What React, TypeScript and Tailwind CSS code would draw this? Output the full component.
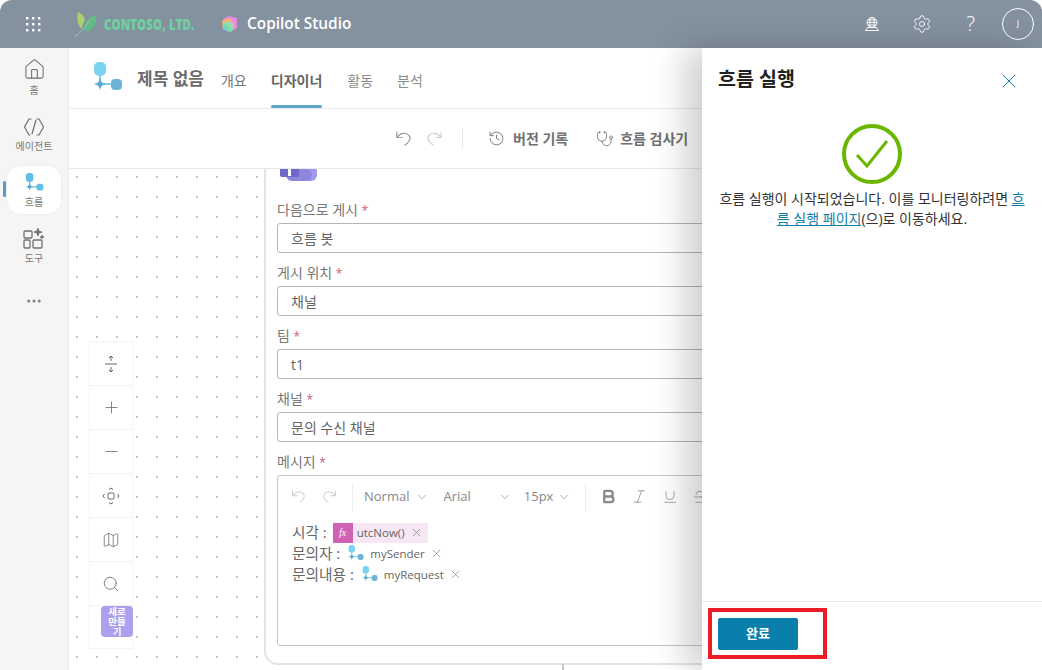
import React from "react";
import { Home, Ellipsis, Plus, Minus, Map, Search, X, ChevronDown, History, Stethoscope, Settings, Bold, Italic, Underline, Strikethrough } from "lucide-react";

const FlowIcon = ({ size = 32, a = "#7bd3ef", b = "#6db3d6" }: { size?: number; a?: string; b?: string }) => (
  <svg width={size} height={size} viewBox="0 0 32 32" fill="none">
    <rect x="3" y="0" width="12" height="14" rx="5" fill={a} />
    <path d="M9 13v8M13 22h8" stroke={a} strokeWidth="2" />
    <path d="M9 16c1 4 2 5 6 6-4 1-5 2-6 6-1-4-2-5-6-6 4-1 5-2 6-6z" fill="#57a9d3" />
    <rect x="20" y="17" width="11" height="11" rx="4" fill={b} />
  </svg>
);

const UndoIcon = ({ size = 17, flip, className }: { size?: number; flip?: boolean; className?: string }) => (
  <svg width={size} height={size} viewBox="0 0 20 20" fill="none" stroke="currentColor" strokeWidth="1.2" className={`${flip ? "-scale-x-100" : ""} ${className ?? ""}`}>
    <path d="M3 3v6h6M3.5 9C6 4 13 3 16 7c2.5 3.5-1 8-5 10" />
  </svg>
);

const Rail = ({ icon, label, active }: { icon: React.ReactNode; label: string; active?: boolean }) => (
  <div className={`w-[54px] h-[48px] shrink-0 flex flex-col items-center justify-center rounded-[14px] ${active ? "bg-white shadow-[0_0_2px_rgba(0,0,0,0.08)]" : ""}`}>
    {icon}
    <span className="text-[10px] leading-[12px] text-[#777] mt-[3px]">{label}</span>
  </div>
);

const Required = () => <span className="text-[#c9607a] text-[12px]">*</span>;

const Field = ({ label, value }: { label: string; value: string }) => (
  <div className="flex flex-col">
    <div className="h-[20px] mb-[3px] text-[14px] leading-[20px] text-[#777]">
      {label} <Required />
    </div>
    <div className="h-[30px] w-[520px] border border-[#b5b5b5] rounded-[3px] pl-[13px] flex items-center text-[14px] text-[#666]">{value}</div>
    <div className="h-[10px]" />
  </div>
);

const ZoomBtn = ({ children }: { children?: React.ReactNode }) => (
  <div className="h-[44px] border-b border-[#f2f2f2] flex items-center justify-center text-[#666]">{children}</div>
);

const Token = ({ label, value }: { label: string; value: string }) => (
  <div className="h-[21px] flex items-center">
    <span className="mr-[7px]">{label} :</span>
    <FlowIcon size={17} />
    <span className="ml-[6px] text-[11.5px] text-[#666]">{value}</span>
    <X size={13} strokeWidth={1.2} className="ml-[5px] text-[#777]" />
  </div>
);

export default function App() {
  return (
    <div
      className="relative w-[1042px] h-[670px] overflow-hidden bg-white flex flex-col rounded-t-[12px]"
      style={{ fontFamily: '"Open Sans","Noto Sans CJK KR",sans-serif' }}
    >
      {/* top bar */}
      <header className="h-[48px] shrink-0 bg-[#84919f] flex items-center text-white">
        <div className="w-[66px] flex justify-center">
          <svg width="16" height="16" viewBox="0 0 16 16" fill="white">
            {[1, 7, 13].flatMap((y) =>
              [1, 7, 13].map((x) => <rect key={`${x}-${y}`} x={x} y={y} width="2.4" height="2.4" />)
            )}
          </svg>
        </div>
        <svg width="22" height="25" viewBox="0 0 22 25" className="ml-[9px]">
          <path d="M3 0c4 2 6 4 7 8-2 3-3 6-3 9C3 14 1 7 3 0z" fill="#a9cf6e" />
          <path d="M21 3c1 9-2 15-11 17-2-8 3-15 11-17z" fill="#62bb86" />
          <path d="M0 24.5C5 21 10 16 14 9" stroke="#8fdcb5" strokeWidth="0.8" fill="none" />
        </svg>
        <span className="ml-[7px] w-[91px] whitespace-nowrap text-[15px] font-extrabold text-[#6fd1a0] tracking-[0.2px] scale-x-[0.755] origin-left" style={{ fontFamily: '"Open Sans",sans-serif' }}>CONTOSO, LTD.</span>
        <svg width="18" height="18" viewBox="0 0 18 18" className="ml-[26px]">
          <defs>
            <linearGradient id="cp" x1="0" y1="1" x2="1" y2="0">
              <stop offset="0" stopColor="#4fc8e8" />
              <stop offset="0.55" stopColor="#8fe0a0" />
              <stop offset="1" stopColor="#f4a9d8" />
            </linearGradient>
          </defs>
          <path d="M8 1l8 2v10l-7 4-7-3V4z" fill="#e58be0" />
          <path d="M1 6l6-3 4 2v11l-2 1-7-3z" fill="#f8b26a" />
          <path d="M3 8l6-2 4 2v6l-4 3-6-2z" fill="url(#cp)" />
        </svg>
        <span className="ml-[8px] text-[15.4px] font-semibold">Copilot Studio</span>
        <div className="ml-auto flex items-center">
          <svg width="16" height="16" viewBox="0 0 16 16" fill="none" stroke="white" strokeWidth="1" className="mr-[32px]">
            <circle cx="8" cy="6.5" r="5" />
            <ellipse cx="8" cy="6.5" rx="2.2" ry="5" />
            <path d="M3 6.5h10M4 4h8M4 9h8M1.5 14.5h13l-2-3h-9z" />
          </svg>
          <Settings size={20} strokeWidth={1.1} className="mr-[35px]" />
          <span className="text-[20px] font-light leading-none mr-[27px]">?</span>
          <div className="w-[32px] h-[32px] rounded-full border border-white flex items-center justify-center text-[9px] mr-[8px]">J</div>
        </div>
      </header>

      <div className="flex-1 flex min-h-0">
        {/* rail */}
        <nav className="w-[69px] shrink-0 bg-[#f5f5f5] border-r border-[#ebebeb] flex flex-col items-center pt-[5px] relative">
          <Rail label="홈" icon={<Home size={23} strokeWidth={1.1} className="text-[#707070]" />} />
          <div className="h-[9px] shrink-0" />
          <Rail label="에이전트" icon={
            <svg width="22" height="20" viewBox="0 0 22 20" fill="none" stroke="#707070" strokeWidth="1.2">
              <path d="M8.5 2H6L1.5 10 6 18h1.5M13.5 2H16l4.5 8-4.5 8h-2.5M13 3L9 17" />
            </svg>} />
          <div className="h-[8px] shrink-0" />
          <Rail active label="흐름" icon={<FlowIcon size={20} a="#5fbfe6" b="#5fbfe6" />} />
          <div className="h-[7px] shrink-0" />
          <Rail label="도구" icon={
            <svg width="22" height="22" viewBox="0 0 22 22" fill="none" stroke="#707070" strokeWidth="1.3">
              <rect x="1" y="4" width="8" height="7" rx="1" />
              <rect x="1" y="13" width="6" height="8" rx="1" />
              <rect x="10" y="13" width="9" height="8" rx="1" />
              <path d="M15 1c.3 3 1 4 4 4-3 .3-4 1-4 4-.3-3-1-4-4-4 3 0 4-1 4-4z" fill="#707070" />
              <path d="M19 8v4M17 10h4" />
            </svg>} />
          <Ellipsis size={18} className="mt-[23px] text-[#808080]" />
          <div className="absolute left-[3px] top-[133px] w-[3px] h-[16px] rounded bg-[#5b9bc8]" />
        </nav>

        <main className="flex-1 min-w-0 flex flex-col">
          <div className="h-[61px] shrink-0 border-b border-[#e8e8e8] flex items-stretch pl-[22px]">
            <div className="flex items-center"><FlowIcon size={32} /></div>
            <div className="flex items-center pt-[1px] ml-[14px] text-[17px] font-bold text-[#6b6b6b]">제목 없음</div>
            <div className="flex items-center pt-[4px] ml-[17px] text-[14px] text-[#777]">개요</div>
            <div className="flex items-center pt-[4px] ml-[24px] text-[14px] font-bold text-[#666] relative">
              디자이너
              <div className="absolute -bottom-[0px] left-0 right-0 h-[3px] rounded bg-[#5aa9c9]" />
            </div>
            <div className="flex items-center pt-[4px] ml-[25px] text-[14px] text-[#8a8a8a]">활동</div>
            <div className="flex items-center pt-[4px] ml-[24px] text-[14px] text-[#8a8a8a]">분석</div>
          </div>
          <div className="h-[60px] shrink-0 border-b border-[#e8e8e8] flex items-center pl-[325px] text-[#777]">
            <UndoIcon size={19} className="text-[#999]" />
            <UndoIcon size={19} flip className="ml-[12px] text-[#cfcfcf]" />
            <div className="w-px h-[20px] bg-[#e8e8e8] ml-[18px]" />
            <History size={17} strokeWidth={1.3} className="ml-[25px]" />
            <span className="ml-[8px] text-[14px] font-semibold text-[#707070]">버전 기록</span>
            <Stethoscope size={18} strokeWidth={1.2} className="ml-[28px]" />
            <span className="ml-[6px] text-[14px] font-semibold text-[#707070]">흐름 검사기</span>
          </div>

          {/* canvas */}
          <div className="flex-1 relative overflow-hidden pl-[195px] bg-[radial-gradient(1.3px_0.8px_at_center,#c4c4c4_100%,transparent_100%)] bg-[size:20px_20px] bg-[position:-2px_-2px]">
            <div className="w-[600px] h-[510px] -mt-[14px] border-2 border-[#e4e4e4] rounded-[14px] bg-white pl-[11px] pt-[8px]">
              <svg width="38" height="24" viewBox="0 0 38 24" className="ml-[3px]">
                <rect x="23" y="0" width="14" height="16" rx="6" fill="#9f9af0" />
                <rect x="6" y="4" width="26" height="12" rx="6" fill="#8d86dc" />
                <rect x="0" y="0" width="19" height="12" rx="2" fill="#6f68c9" />
                <rect x="8" y="4" width="3" height="7" fill="white" />
              </svg>
              <div className="h-[11px]" />
              <Field label="다음으로 게시" value="흐름 봇" />
              <Field label="게시 위치" value="채널" />
              <Field label="팀" value="t1" />
              <Field label="채널" value="문의 수신 채널" />
              <div className="h-[20px] mb-[3px] text-[14px] leading-[20px] text-[#777]">메시지 <Required /></div>
              <div className="w-[520px] h-[171px] border border-[#c5c5c5] rounded-[3px]">
                <div className="h-[41px] flex items-center pl-[12px] text-[#888]">
                  <UndoIcon size={17} className="text-[#cfcfcf]" />
                  <UndoIcon size={17} flip className="ml-[14px] text-[#cfcfcf]" />
                  <div className="w-px h-[28px] bg-[#ececec] ml-[14px]" />
                  <span className="ml-[11px] text-[13px]">Normal</span>
                  <ChevronDown size={14} strokeWidth={1.1} className="ml-[6px]" />
                  <span className="ml-[14px] text-[13px]">Arial</span>
                  <ChevronDown size={14} strokeWidth={1.1} className="ml-[27px]" />
                  <span className="ml-[12px] text-[13px]">15px</span>
                  <ChevronDown size={14} strokeWidth={1.1} className="ml-[4px]" />
                  <div className="w-px h-[28px] bg-[#ececec] ml-[14px]" />
                  <Bold size={17} strokeWidth={3.2} className="ml-[14px]" />
                  <Italic size={17} strokeWidth={1.1} className="ml-[14px]" />
                  <Underline size={16} strokeWidth={1.1} className="ml-[14px]" />
                  <Strikethrough size={16} strokeWidth={1.1} className="ml-[14px]" />
                </div>
                <div className="pl-[14px] pt-[5px] text-[14.7px] text-[#666]">
                  <div className="h-[21px] flex items-center">
                    <span className="mr-[6px]">시각 :</span>
                    <div className="flex items-center h-[20px] bg-[#f7e6f4] pr-[5px]">
                      <span className="w-[20px] h-[20px] bg-[#cf62b5] text-white flex items-center justify-center italic text-[10px]" style={{ fontFamily: '"Liberation Serif",serif' }}>fx</span>
                      <span className="ml-[4px] text-[11.5px]">utcNow()</span>
                      <X size={13} strokeWidth={1.2} className="ml-[5px] text-[#777]" />
                    </div>
                  </div>
                  <Token label="문의자" value="mySender" />
                  <Token label="문의내용" value="myRequest" />
                </div>
              </div>
            </div>
            <div className="absolute left-[493px] bottom-0 w-[2px] h-[6px] bg-[#c8c8c8]" />

            {/* zoom controls */}
            <div className="absolute left-[20px] top-[172px] w-[44px] h-[308px] bg-white border border-[#f4f4f4]">
              <ZoomBtn>
                <svg width="16" height="18" viewBox="0 0 16 18" fill="none" stroke="#666" strokeWidth="1"><path d="M2 9h12M8 1v5M6 3l2-2 2 2M8 17v-5M6 15l2 2 2-2" /></svg>
              </ZoomBtn>
              <ZoomBtn><Plus size={19} strokeWidth={1} /></ZoomBtn>
              <ZoomBtn><Minus size={19} strokeWidth={1} /></ZoomBtn>
              <ZoomBtn>
                <svg width="18" height="18" viewBox="0 0 18 18" fill="none" stroke="#666" strokeWidth="1"><rect x="6" y="6" width="6" height="6" rx="1" /><path d="M7 2.5L9 1l2 1.5M7 15.5L9 17l2-1.5M2.5 7L1 9l1.5 2M15.5 7L17 9l-1.5 2" /></svg>
              </ZoomBtn>
              <ZoomBtn><Map size={18} strokeWidth={1} /></ZoomBtn>
              <ZoomBtn><Search size={18} strokeWidth={1.1} /></ZoomBtn>
              <div className="absolute left-[11px] top-[264px] w-[32px] h-[31px] rounded-[4px] bg-[#aca0ee] text-white text-[9.5px] leading-[10px] font-semibold text-center flex items-center justify-center px-[4px]">새로 만들기</div>
            </div>
          </div>
        </main>
      </div>

      {/* side panel */}
      <aside className="absolute right-0 top-[48px] bottom-0 w-[340px] bg-white shadow-[-18px_0_30px_rgba(0,0,0,0.18)] flex flex-col">
        <div className="h-[61px] flex items-center justify-between pl-[16px] pr-[21px]">
          <span className="text-[19.5px] font-bold text-[#222]">흐름 실행</span>
          <X size={24} strokeWidth={1} className="text-[#0f7ea8] mt-[4px]" />
        </div>
        <div className="flex-1 flex flex-col items-center pt-[15px] px-[16px]">
          <svg width="60" height="60" viewBox="0 0 60 60" fill="none">
            <circle cx="30" cy="30" r="28" stroke="#6bb700" strokeWidth="4" />
            <path d="M15 31l10 11L45 17" stroke="#6bb700" strokeWidth="3" />
          </svg>
          <p className="mt-[5px] text-[14px] leading-[20px] text-center text-[#333]">
            흐름 실행이 시작되었습니다. 이를 모니터링하려면 <span className="text-[#0f7ea8] underline">흐름 실행 페이지</span>(으)로 이동하세요.
          </p>
        </div>
        <div className="h-[69px] border-t border-[#e8e8e8] pl-[16px] pt-[16px]">
          <div className="w-[80px] h-[32px] rounded-[2px] bg-[#0a7fab] text-white text-[13px] font-bold flex items-center justify-center">완료</div>
        </div>
      </aside>
      {/* annotation */}
      <div className="absolute left-[708px] top-[608px] w-[119px] h-[51px] border-[4px] border-[#ed1c24]" />
    </div>
  );
}
